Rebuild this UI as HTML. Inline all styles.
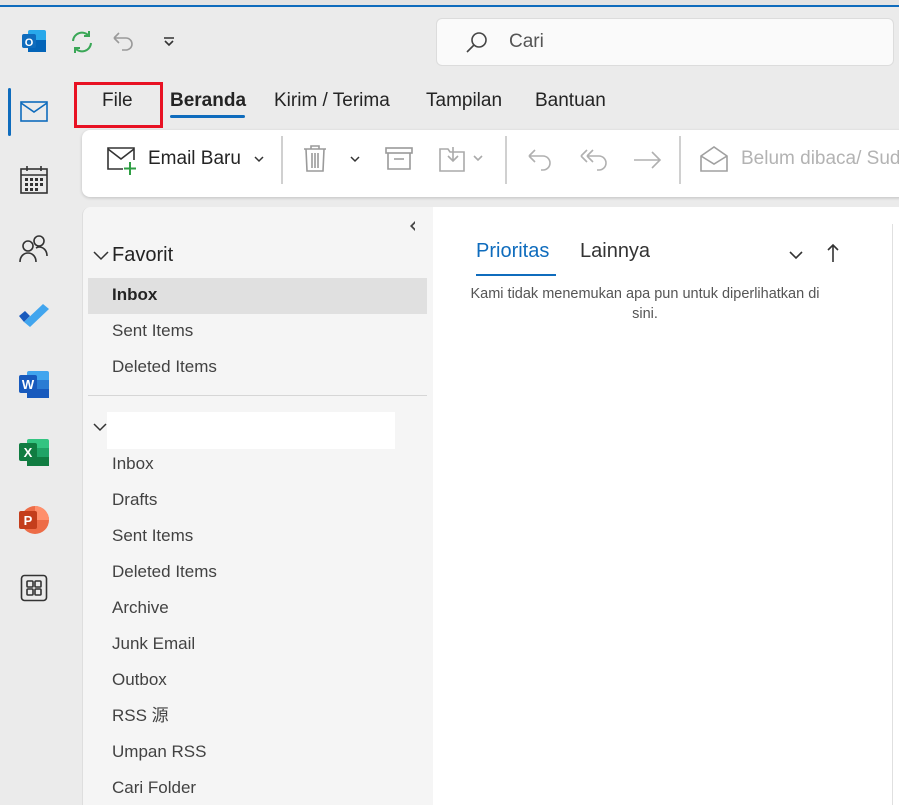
<!DOCTYPE html>
<html><head><meta charset="utf-8"><style>
*{margin:0;padding:0;box-sizing:border-box}
body{width:899px;height:805px;overflow:hidden;background:#ebebeb;font-family:"Segoe UI","Liberation Sans","Noto Sans CJK SC",sans-serif;color:#242424;position:relative}
.a{position:absolute}
.t{position:absolute;white-space:nowrap}
.f{font-size:17px;color:#424242;line-height:22px;height:22px}
</style></head><body>
<div class="a" style="left:0;top:0;width:899px;height:5px;background:#e4e4e4"></div>
<div class="a" style="left:0;top:5px;width:899px;height:2px;background:#0f6cbd"></div>
<svg class="a" style="left:20px;top:28px" width="28" height="28" viewBox="0 0 28 28"><rect x="8" y="2" width="18" height="22" rx="2" fill="#28a8ea"/><rect x="8" y="12" width="18" height="12" fill="#0364b8"/><rect x="2" y="6" width="14" height="14" rx="2" fill="#0f6cbd"/><text x="9" y="18" font-size="11" font-weight="bold" fill="#fff" text-anchor="middle" font-family="Liberation Sans">O</text></svg>
<svg class="a" style="left:68px;top:28px" width="28" height="28" viewBox="0 0 28 28" fill="none" stroke="#3aa757" stroke-width="2"><path d="M5 13a9 9 0 0 1 16-5M23 15a9 9 0 0 1-16 5"/><path d="M21 3v5h-5M7 25v-5h5"/></svg>
<svg class="a" style="left:110px;top:28px" width="28" height="28" viewBox="0 0 28 28" fill="none" stroke="#9a9a9a" stroke-width="1.6"><path d="M4 10h12a6 6 0 0 1 0 12h-4M4 10l5-5M4 10l5 5"/></svg>
<svg class="a" style="left:162px;top:36px" width="14" height="12" viewBox="0 0 14 12" fill="none" stroke="#333" stroke-width="1.6"><path d="M2 2h10M3 5l4 4 4-4"/></svg>
<div class="a" style="left:436px;top:18px;width:458px;height:48px;background:#fafafa;border:1px solid #dcdcdc;border-radius:6px"></div>
<svg class="a" style="left:464px;top:30px" width="26" height="26" viewBox="0 0 26 26" fill="none" stroke="#444" stroke-width="1.6"><circle cx="15" cy="10" r="7"/><path d="M10 15l-7 7"/></svg>
<div class="t" style="left:509px;top:31px;font-size:19px;color:#555">Cari</div>
<div class="a" style="left:82px;top:130px;width:830px;height:67px;background:#fff;border-radius:8px;box-shadow:0 1px 3px rgba(0,0,0,.18)"></div>
<div class="a" style="left:74px;top:82px;width:89px;height:46px;border:3px solid #e81123"></div>
<div class="t" style="left:102px;top:90px;font-size:19px">File</div>
<div class="t" style="left:170px;top:90px;font-size:19px;font-weight:bold">Beranda</div>
<div class="a" style="left:170px;top:115px;width:75px;height:3px;background:#0f6cbd;border-radius:2px"></div>
<div class="t" style="left:274px;top:90px;font-size:19px">Kirim / Terima</div>
<div class="t" style="left:426px;top:90px;font-size:19px">Tampilan</div>
<div class="t" style="left:535px;top:90px;font-size:19px">Bantuan</div>
<svg class="a" style="left:106px;top:146px" width="32" height="30" viewBox="0 0 32 30" fill="none"><path d="M17 23H2V2h26v12" stroke="#333" stroke-width="1.6"/><path d="M2 3l13 10 13-10" stroke="#333" stroke-width="1.6"/><path d="M24 16v13M18 22.5h12" stroke="#2f9e44" stroke-width="2"/></svg>
<div class="t" style="left:148px;top:148px;font-size:19px">Email Baru</div>
<svg class="a" style="left:253px;top:155px" width="12" height="8" viewBox="0 0 12 8" fill="none" stroke="#333" stroke-width="1.5"><path d="M2 2l4 4 4-4"/></svg>
<div class="a" style="left:281px;top:136px;width:2px;height:48px;background:#d0d0d0"></div>
<svg class="a" style="left:302px;top:144px" width="26" height="30" viewBox="0 0 26 30" fill="none" stroke="#9a9a9a" stroke-width="1.6"><path d="M2 5h22M9 5V2h8v3M4 5l1 22h16l1-22M10 9v15M13 9v15M16 9v15"/></svg>
<svg class="a" style="left:349px;top:155px" width="12" height="8" viewBox="0 0 12 8" fill="none" stroke="#333" stroke-width="1.5"><path d="M2 2l4 4 4-4"/></svg>
<svg class="a" style="left:385px;top:147px" width="28" height="24" viewBox="0 0 28 24" fill="none" stroke="#9a9a9a" stroke-width="1.6"><rect x="1" y="1" width="26" height="5"/><path d="M3 6v16h22V6M9 12h10"/></svg>
<svg class="a" style="left:438px;top:145px" width="48" height="28" viewBox="0 0 48 28" fill="none" stroke="#aaa" stroke-width="1.6"><path d="M2 4h8l2 3h14v19H2zM15 2v14M10 11l5 5 5-5M36 11l4 4 4-4"/></svg>
<div class="a" style="left:505px;top:136px;width:2px;height:48px;background:#d0d0d0"></div>
<svg class="a" style="left:526px;top:146px" width="30" height="28" viewBox="0 0 30 28" fill="none" stroke="#b0b0b0" stroke-width="1.6"><path d="M3 10h14a7 7 0 0 1 0 14h-2M3 10l6-6M3 10l6 6"/></svg>
<svg class="a" style="left:578px;top:146px" width="34" height="28" viewBox="0 0 34 28" fill="none" stroke="#b0b0b0" stroke-width="1.6"><path d="M9 10h12a7 7 0 0 1 0 14h-2M9 10l6-6M9 10l6 6M3 10l6-6M3 10l6 6"/></svg>
<svg class="a" style="left:632px;top:146px" width="32" height="28" viewBox="0 0 32 28" fill="none" stroke="#b0b0b0" stroke-width="1.6"><path d="M2 14h26M20 6l8 8-8 8"/></svg>
<div class="a" style="left:679px;top:136px;width:2px;height:48px;background:#d0d0d0"></div>
<svg class="a" style="left:699px;top:145px" width="30" height="28" viewBox="0 0 30 28" fill="none" stroke="#a0a0a0" stroke-width="1.6"><path d="M2 11L15 2l13 9v15H2zM2 11l13 8 13-8"/></svg>
<div class="t" style="left:741px;top:148px;font-size:19px;color:#b3b3b3">Belum dibaca/ Sudah</div>
<div class="a" style="left:8px;top:88px;width:3px;height:48px;background:#0f6cbd;border-radius:2px"></div>
<svg class="a" style="left:19px;top:100px" width="30" height="24" viewBox="0 0 30 24" fill="none" stroke="#0f6cbd" stroke-width="1.6"><rect x="2" y="2" width="26" height="19"/><path d="M2 3l13 9 13-9"/></svg>
<svg class="a" style="left:19px;top:165px" width="30" height="30" viewBox="0 0 30 30" fill="none" stroke="#333" stroke-width="1.6"><rect x="2" y="4" width="26" height="24"/><path d="M2 10h26M8 1v5M22 1v5"/><g fill="#333" stroke="none"><rect x="6" y="13" width="3" height="3"/><rect x="11" y="13" width="3" height="3"/><rect x="16" y="13" width="3" height="3"/><rect x="21" y="13" width="3" height="3"/><rect x="6" y="18" width="3" height="3"/><rect x="11" y="18" width="3" height="3"/><rect x="16" y="18" width="3" height="3"/><rect x="21" y="18" width="3" height="3"/><rect x="6" y="23" width="3" height="3"/><rect x="11" y="23" width="3" height="3"/><rect x="16" y="23" width="3" height="3"/></g></svg>
<svg class="a" style="left:18px;top:233px" width="32" height="30" viewBox="0 0 32 30" fill="none" stroke="#333" stroke-width="1.6"><circle cx="10" cy="13" r="5"/><path d="M2 29c0-6 4-9 8-9s8 3 8 9"/><circle cx="21" cy="8" r="5"/><path d="M18 15c1-.5 2-1 3-1 4 0 8 3 8 9"/></svg>
<svg class="a" style="left:18px;top:303px" width="32" height="26" viewBox="0 0 32 26"><path d="M1 13l6-5 5 5-6 6z" fill="#185abd"/><path d="M6 19L25 1l6 5L12 24z" fill="#41a5ee"/></svg>
<svg class="a" style="left:19px;top:370px" width="30" height="28" viewBox="0 0 30 28"><rect x="8" y="1" width="22" height="27" rx="2" fill="#41a5ee"/><rect x="8" y="10" width="22" height="9" fill="#2b7cd3"/><rect x="8" y="19" width="22" height="9" fill="#185abd"/><rect x="0" y="5" width="18" height="18" rx="2" fill="#185abd"/><text x="9" y="19" font-size="13" font-weight="bold" fill="#fff" text-anchor="middle" font-family="Liberation Sans">W</text></svg>
<svg class="a" style="left:19px;top:438px" width="30" height="28" viewBox="0 0 30 28"><rect x="8" y="1" width="22" height="27" rx="2" fill="#33c481"/><rect x="8" y="10" width="22" height="9" fill="#21a366"/><rect x="8" y="19" width="22" height="9" fill="#107c41"/><rect x="0" y="5" width="18" height="18" rx="2" fill="#107c41"/><text x="9" y="19" font-size="13" font-weight="bold" fill="#fff" text-anchor="middle" font-family="Liberation Sans">X</text></svg>
<svg class="a" style="left:19px;top:506px" width="30" height="28" viewBox="0 0 30 28"><circle cx="16" cy="14" r="14" fill="#ed6c47"/><path d="M16 0a14 14 0 0 1 14 14H16z" fill="#ff8f6b"/><rect x="0" y="5" width="18" height="18" rx="2" fill="#c43e1c"/><text x="9" y="19" font-size="13" font-weight="bold" fill="#fff" text-anchor="middle" font-family="Liberation Sans">P</text></svg>
<svg class="a" style="left:20px;top:574px" width="28" height="28" viewBox="0 0 28 28" fill="none" stroke="#333" stroke-width="1.6"><rect x="1.5" y="1.5" width="25" height="25" rx="3"/><rect x="7" y="7" width="6" height="6" rx="1"/><rect x="15" y="7" width="6" height="6" rx="1"/><rect x="7" y="15" width="6" height="6" rx="1"/><rect x="15" y="15" width="6" height="6" rx="1"/></svg>
<div class="a" style="left:82px;top:207px;width:351px;height:598px;background:#f5f5f5;border-top-left-radius:8px;border-left:1px solid #dedede"></div>
<svg class="a" style="left:408px;top:220px" width="10" height="12" viewBox="0 0 10 12" fill="#444"><path d="M7 1L2 6l5 5V8.5L4.5 6 7 3.5z"/></svg>
<svg class="a" style="left:92px;top:250px" width="18" height="12" viewBox="0 0 18 12" fill="none" stroke="#333" stroke-width="1.5"><path d="M2 2l7 7 7-7"/></svg>
<div class="t" style="left:112px;top:244px;font-size:20px">Favorit</div>
<div class="a" style="left:88px;top:278px;width:339px;height:36px;background:#e0e0e0"></div>
<div class="t f" style="left:112px;top:284px;font-weight:bold;color:#242424">Inbox</div>
<div class="t f" style="left:112px;top:320px">Sent Items</div>
<div class="t f" style="left:112px;top:356px">Deleted Items</div>
<div class="a" style="left:88px;top:395px;width:339px;height:1px;background:#d6d6d6"></div>
<svg class="a" style="left:92px;top:422px" width="16" height="12" viewBox="0 0 16 12" fill="none" stroke="#333" stroke-width="1.5"><path d="M2 2l6 6 6-6"/></svg>
<div class="a" style="left:107px;top:412px;width:288px;height:37px;background:#fff"></div>
<div class="t f" style="left:112px;top:453px">Inbox</div>
<div class="t f" style="left:112px;top:489px">Drafts</div>
<div class="t f" style="left:112px;top:525px">Sent Items</div>
<div class="t f" style="left:112px;top:561px">Deleted Items</div>
<div class="t f" style="left:112px;top:597px">Archive</div>
<div class="t f" style="left:112px;top:633px">Junk Email</div>
<div class="t f" style="left:112px;top:669px">Outbox</div>
<div class="t f" style="left:112px;top:705px">RSS 源</div>
<div class="t f" style="left:112px;top:741px">Umpan RSS</div>
<div class="t f" style="left:112px;top:777px">Cari Folder</div>
<div class="a" style="left:433px;top:207px;width:466px;height:598px;background:#fff"></div>
<div class="a" style="left:892px;top:224px;width:1px;height:581px;background:#e0e0e0"></div>
<div class="t" style="left:476px;top:240px;font-size:20px;color:#0f6cbd">Prioritas</div>
<div class="a" style="left:476px;top:274px;width:80px;height:2px;background:#0f6cbd"></div>
<div class="t" style="left:580px;top:240px;font-size:20px;color:#333">Lainnya</div>
<svg class="a" style="left:788px;top:250px" width="16" height="12" viewBox="0 0 16 12" fill="none" stroke="#333" stroke-width="1.6"><path d="M2 2l6 6 6-6"/></svg>
<svg class="a" style="left:826px;top:243px" width="14" height="20" viewBox="0 0 14 20" fill="none" stroke="#333" stroke-width="1.6"><path d="M7 19V2M2 7l5-5 5 5"/></svg>
<div class="t" style="left:440px;top:284px;width:410px;text-align:center;font-size:14.5px;color:#555;line-height:20px">Kami tidak menemukan apa pun untuk diperlihatkan di<br>sini.</div>
</body></html>
